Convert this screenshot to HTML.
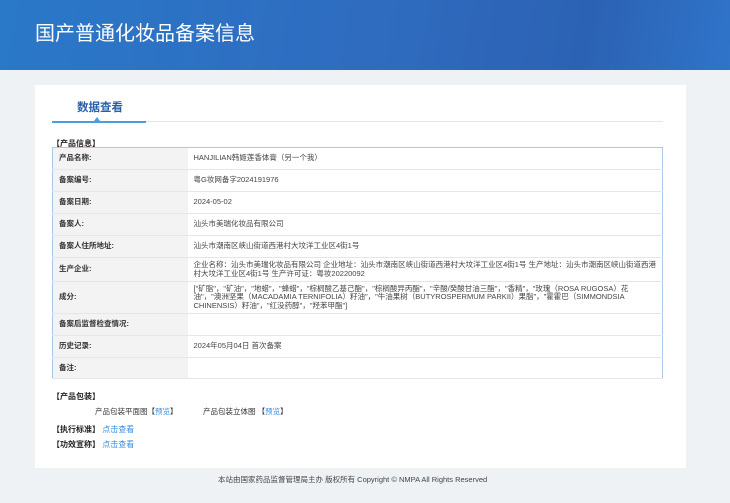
<!DOCTYPE html>
<html><head><meta charset="utf-8"><style>
*{margin:0;padding:0;box-sizing:border-box}
body{width:730px;height:503px;background:#eef2f5;font-family:"Liberation Sans","Noto Sans CJK SC",sans-serif;position:relative;overflow:hidden;color:#333}
.hd{position:absolute;left:0;top:0;width:730px;height:70px;background:linear-gradient(100deg,#2a78c8 0%,#2f6cc0 50%,#2c62b4 80%,#2f74c9 100%);overflow:hidden}
.hd h1{position:absolute;left:35px;top:17px;font-size:20px;font-weight:normal;color:#fff;font-family:"Noto Sans CJK SC",sans-serif}
.card{position:absolute;left:35px;top:85px;width:651px;height:383px;background:#fff}
.tab{position:absolute;left:77px;top:99px;font-size:11.5px;color:#2a5fa8;font-weight:bold}
.tl{position:absolute;left:52px;top:121px;width:611px;height:1px;background:#e3e6ea}
.tb{position:absolute;left:52px;top:121px;width:94px;height:2px;background:#4d9be0}
.tri{position:absolute;left:94px;top:117px;width:0;height:0;border-left:3px solid transparent;border-right:3px solid transparent;border-bottom:4px solid #4d9be0}
.sec{position:absolute;font-size:8px;font-weight:bold;color:#222}
table{position:absolute;left:52px;top:147px;width:611px;border-collapse:collapse;border:1px solid #a9c8ea;font-size:7.5px}
td{border-bottom:1px solid #e6e6e6;padding:0 6px;vertical-align:middle;line-height:8.5px}
td.l{width:135px;background:#f3f3f3;font-weight:bold;color:#333}
td.v{color:#444}
.sm{position:absolute;font-size:7.5px;color:#333}
a{color:#3a8ee0;text-decoration:none}
.ft{position:absolute;left:218px;top:474px;font-size:7.5px;color:#444}
</style></head><body>
<div class="hd"><h1>国产普通化妆品备案信息</h1></div>
<div class="card"></div>
<div class="tab">数据查看</div>
<div class="tl"></div><div class="tb"></div><div class="tri"></div>
<div class="sec" style="left:52px;top:138px">【产品信息】</div>
<table>
<tr style="height:22px"><td class="l">产品名称:</td><td class="v">HANJILIAN韩姬莲香体膏（另一个我）</td></tr>
<tr style="height:22px"><td class="l">备案编号:</td><td class="v">粤G妆网备字2024191976</td></tr>
<tr style="height:22px"><td class="l">备案日期:</td><td class="v">2024-05-02</td></tr>
<tr style="height:22px"><td class="l">备案人:</td><td class="v">汕头市美瑞化妆品有限公司</td></tr>
<tr style="height:22px"><td class="l">备案人住所地址:</td><td class="v">汕头市潮南区峡山街道西港村大坟洋工业区4街1号</td></tr>
<tr style="height:24px"><td class="l">生产企业:</td><td class="v">企业名称：汕头市美瑞化妆品有限公司 企业地址：汕头市潮南区峡山街道西港村大坟洋工业区4街1号 生产地址：汕头市潮南区峡山街道西港村大坟洋工业区4街1号 生产许可证：粤妆20220092</td></tr>
<tr style="height:32px"><td class="l">成分:</td><td class="v">["矿脂"，"矿油"，"地蜡"，"蜂蜡"，"棕榈酸乙基己酯"，"棕榈酸异丙酯"，"辛酸/癸酸甘油三酯"，"香精"，"玫瑰（ROSA RUGOSA）花油"，"澳洲坚果（MACADAMIA TERNIFOLIA）籽油"，"牛油果树（BUTYROSPERMUM PARKII）果脂"，"霍霍巴（SIMMONDSIA CHINENSIS）籽油"，"红没药醇"，"羟苯甲酯"]</td></tr>
<tr style="height:22px"><td class="l">备案后监督检查情况:</td><td class="v"></td></tr>
<tr style="height:22px"><td class="l">历史记录:</td><td class="v">2024年05月04日 首次备案</td></tr>
<tr style="height:21px"><td class="l">备注:</td><td class="v"></td></tr>
</table>
<div class="sec" style="left:52px;top:391px">【产品包装】</div>
<div class="sm" style="left:95px;top:406px">产品包装平面图【<a>预览</a>】</div>
<div class="sm" style="left:203px;top:406px">产品包装立体图 【<a>预览</a>】</div>
<div class="sec" style="left:52px;top:424px">【执行标准】 <a style="font-weight:normal">点击查看</a></div>
<div class="sec" style="left:52px;top:439px">【功效宣称】 <a style="font-weight:normal">点击查看</a></div>
<div class="ft">本站由国家药品监督管理局主办 版权所有 Copyright © NMPA All Rights Reserved</div>
</body></html>
